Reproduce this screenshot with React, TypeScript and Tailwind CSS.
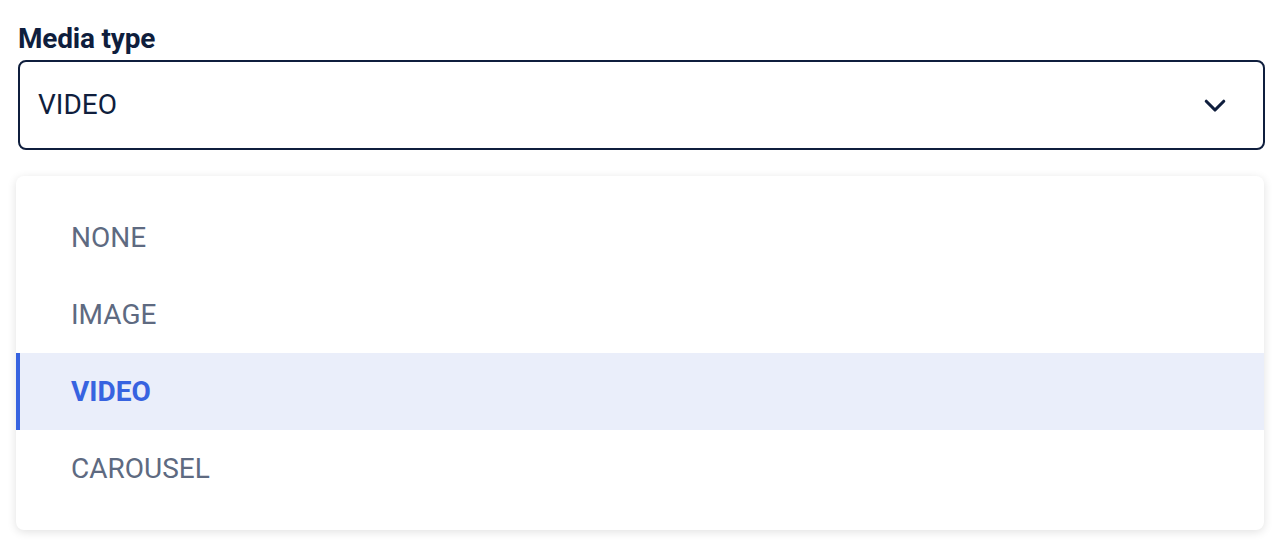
import { useState } from "react";

const options = ["NONE", "IMAGE", "VIDEO", "CAROUSEL"];

const Chevron = () => (
  <svg width="30" height="30" viewBox="0 0 24 24" fill="none" stroke="#0f1e3d" strokeWidth="2.5" strokeLinecap="round" strokeLinejoin="round">
    <path d="M5 9l7 7 7-7" />
  </svg>
);

export default function App() {
  const [value, setValue] = useState("VIDEO");

  return (
    <div className="w-[1272px] h-[546px] bg-white font-['Roboto',sans-serif] pl-[16px] pr-[7px] pt-[22px]">
      <div className="pl-[2px]">
        <label className="block text-[28px] leading-[34px] font-bold text-[#0f1e3d] tracking-[-0.2px]">
          Media type
        </label>
        <button className="mt-[4px] w-full h-[90px] flex items-center justify-between border-2 border-[#0f1e3d] rounded-[8px] pl-[18px] pr-[33px] text-[28px] text-[#0f1e3d]">
          <span>{value}</span>
          <Chevron />
        </button>
      </div>
      <ul className="mt-[26px] mr-[1px] bg-white rounded-[8px] shadow-[0_2px_10px_rgba(0,0,0,0.12)] pt-[23px] pb-[23px]">
        {options.map((o) => {
          const active = o === value;
          return (
            <li
              key={o}
              onClick={() => setValue(o)}
              className={
                active
                  ? "h-[77px] flex items-center pl-[51px] border-l-4 border-[#3763e0] bg-[#eaeefa] text-[#3763e0] font-bold text-[28px]"
                  : "h-[77px] flex items-center pl-[55px] text-[#5e6a81] text-[28px]"
              }
            >
              {o}
            </li>
          );
        })}
      </ul>
    </div>
  );
}
